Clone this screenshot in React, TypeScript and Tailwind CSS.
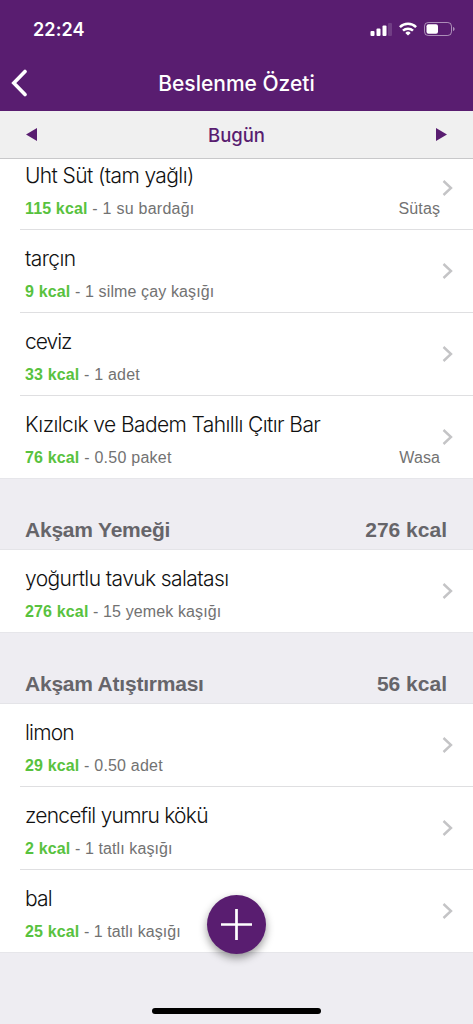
import clsx from "clsx";

type Food = {
  name: string;
  kcal: number;
  amount: string;
  brand?: string;
  nameTracking: string;
  amountTracking: string;
};

type Meal = {
  title: string;
  total: number;
  foods: Food[];
};

const snackFoods: Food[] = [
  { name: "Uht Süt (tam yağlı)", kcal: 115, amount: "1 su bardağı", brand: "Sütaş", nameTracking: "tracking-[-0.6px]", amountTracking: "tracking-[0.25px]" },
  { name: "tarçın", kcal: 9, amount: "1 silme çay kaşığı", nameTracking: "tracking-[-0.6px]", amountTracking: "tracking-[0.12px]" },
  { name: "ceviz", kcal: 33, amount: "1 adet", nameTracking: "tracking-[-1px]", amountTracking: "tracking-[0.2px]" },
  { name: "Kızılcık ve Badem Tahıllı Çıtır Bar", kcal: 76, amount: "0.50 paket", brand: "Wasa", nameTracking: "tracking-[-0.59px]", amountTracking: "tracking-[0.25px]" },
];

const meals: Meal[] = [
  {
    title: "Akşam Yemeği",
    total: 276,
    foods: [
      { name: "yoğurtlu tavuk salatası", kcal: 276, amount: "15 yemek kaşığı", nameTracking: "tracking-[-0.59px]", amountTracking: "tracking-[0.12px]" },
    ],
  },
  {
    title: "Akşam Atıştırması",
    total: 56,
    foods: [
      { name: "limon", kcal: 29, amount: "0.50 adet", nameTracking: "tracking-[-0.8px]", amountTracking: "tracking-[0.2px]" },
      { name: "zencefil yumru kökü", kcal: 2, amount: "1 tatlı kaşığı", nameTracking: "tracking-[-0.76px]", amountTracking: "tracking-[0.1px]" },
      { name: "bal", kcal: 25, amount: "1 tatlı kaşığı", nameTracking: "tracking-[-0.8px]", amountTracking: "tracking-[0.05px]" },
    ],
  },
];

function StatusBar() {
  return (
    <div className="flex h-[58px] items-center justify-between pl-[33px] pr-[18px] text-white">
      <span className="pt-0.5 font-['Inter'] text-[18px] font-semibold leading-none tracking-[0.1px]">22:24</span>
      <div className="flex items-center gap-[7px]">
        <svg width="22" height="14" viewBox="0 0 22 14" fill="currentColor">
          <rect x="0.5" y="9" width="4" height="5" rx="1" />
          <rect x="6.5" y="6.5" width="4" height="7.5" rx="1" />
          <rect x="12.5" y="3.5" width="4" height="10.5" rx="1" />
          <rect x="18" y="1" width="4" height="13" rx="1" opacity="0.15" />
        </svg>
        <svg width="18" height="14" viewBox="0 0 18 14" fill="none" stroke="currentColor" strokeWidth="2.5">
          <path d="M0.9 5.1a11.5 11.5 0 0 1 16.2 0" />
          <path d="M4 8.7a7.2 7.2 0 0 1 10 0" />
          <path d="M9 13.6L6.3 10.9a3.9 3.9 0 0 1 5.4 0z" fill="currentColor" stroke="none" />
        </svg>
        <svg width="31" height="14" viewBox="0 0 31 14" fill="none">
          <rect x="0.5" y="0.5" width="27" height="13" rx="3.7" stroke="white" strokeOpacity="0.5" />
          <rect x="2.5" y="2.3" width="11.5" height="9.4" rx="2" fill="white" />
          <path d="M29 5v4c1-.3 1.6-1.1 1.6-2S30 5.3 29 5z" fill="white" fillOpacity="0.5" />
        </svg>
      </div>
    </div>
  );
}

function FoodRow({ food, clipped, last }: { food: Food; clipped?: boolean; last?: boolean }) {
  return (
    <li className={clsx("flex flex-col justify-end", !last && "pl-5", clipped ? "h-[71px]" : "h-[83px]")}>
      <div
        className={clsx(
          "flex h-[83px] shrink-0 items-center border-b pr-5",
          last ? "border-[#e6e6ea] pl-[25px]" : "border-[#dfdfe1] pl-[5px]"
        )}
      >
        <div className="flex flex-1 flex-col pt-[6px]">
          <span className={clsx("h-[35px] whitespace-nowrap text-[21px] font-light leading-[28px] text-[#111]", food.nameTracking)}>
            {food.name}
          </span>
          <div className="flex h-[24px] items-center justify-between pr-[2px] font-['Liberation_Sans'] text-[16px] leading-6 text-[#727272]">
            <span className={clsx("whitespace-nowrap", food.amountTracking)}>
              <b className="tracking-[0.15px] text-[#58c23e]">{food.kcal} kcal</b> - {food.amount}
            </span>
            <span className="tracking-[0.1px]">{food.brand}</span>
          </div>
        </div>
        <svg width="11" height="16" viewBox="0 0 11 16" fill="none" stroke="#c4c4c6" strokeWidth="2.4">
          <path d="M1.5 1L9 8l-7.5 7" />
        </svg>
      </div>
    </li>
  );
}

function MealSection({ meal }: { meal: Meal }) {
  return (
    <section>
      <div className="flex h-[71px] items-end justify-between border-b border-[#e4e4e8] bg-[#eeedf2] pb-[5px] pl-[25px] pr-[26px] font-['Liberation_Sans'] text-[21px] font-bold leading-[28px] text-[#66656a]">
        <h2 className="tracking-[-0.22px]">{meal.title}</h2>
        <span>{meal.total} kcal</span>
      </div>
      <ul>
        {meal.foods.map((food, i) => (
          <FoodRow key={food.name} food={food} last={i === meal.foods.length - 1} />
        ))}
      </ul>
    </section>
  );
}

export default function App() {
  return (
    <div className="relative flex h-[1024px] w-[473px] flex-col overflow-hidden bg-[#eeedf2] font-['Inter',sans-serif]">
      <header className="h-[111px] shrink-0 bg-[#591d70]">
        <StatusBar />
        <div className="grid h-[50px] grid-cols-[60px_1fr_60px] items-center text-white">
          <button className="pl-[11px]" aria-label="Geri">
            <svg width="17" height="28" viewBox="0 0 17 28" fill="none" stroke="currentColor" strokeWidth="3.6" strokeLinecap="round" strokeLinejoin="miter">
              <path d="M14 2.5L2.8 14L14 25.5" />
            </svg>
          </button>
          <h1 className="pt-0.5 text-center text-[21px] font-medium">Beslenme Özeti</h1>
        </div>
      </header>

      {/* Day switcher */}
      <div className="flex h-12 shrink-0 items-center justify-between border-b border-[#c8c8ca] bg-[#f0f0f0] px-[26px] text-[#591d70]">
        <svg width="11" height="13" viewBox="0 0 11 13" fill="currentColor">
          <path d="M11 0v13L0 6.5z" />
        </svg>
        <span className="pt-[3px] text-[18.5px] font-medium">Bugün</span>
        <svg width="11" height="13" viewBox="0 0 11 13" fill="currentColor">
          <path d="M0 0v13L11 6.5z" />
        </svg>
      </div>

      <main className="shrink-0 bg-white">
        <ul>
          {snackFoods.map((food, i) => (
            <FoodRow key={food.name} food={food} clipped={i === 0} last={i === snackFoods.length - 1} />
          ))}
        </ul>
        {meals.map((meal) => (
          <MealSection key={meal.title} meal={meal} />
        ))}
      </main>

      {/* Add button and home indicator float over the list */}
      <button
        aria-label="Ekle"
        className="absolute left-[207px] top-[895px] flex size-[59px] items-center justify-center rounded-full bg-[#591d70] shadow-[0_4px_9px_rgba(0,0,0,0.4)]"
      >
        <svg width="31" height="31" viewBox="0 0 31 31" stroke="white" strokeWidth="2.7">
          <path d="M15.5 0v31M0 15.5h31" />
        </svg>
      </button>
      <div className="absolute bottom-[10px] left-[152px] h-[6px] w-[169px] rounded-full bg-black" />
    </div>
  );
}
